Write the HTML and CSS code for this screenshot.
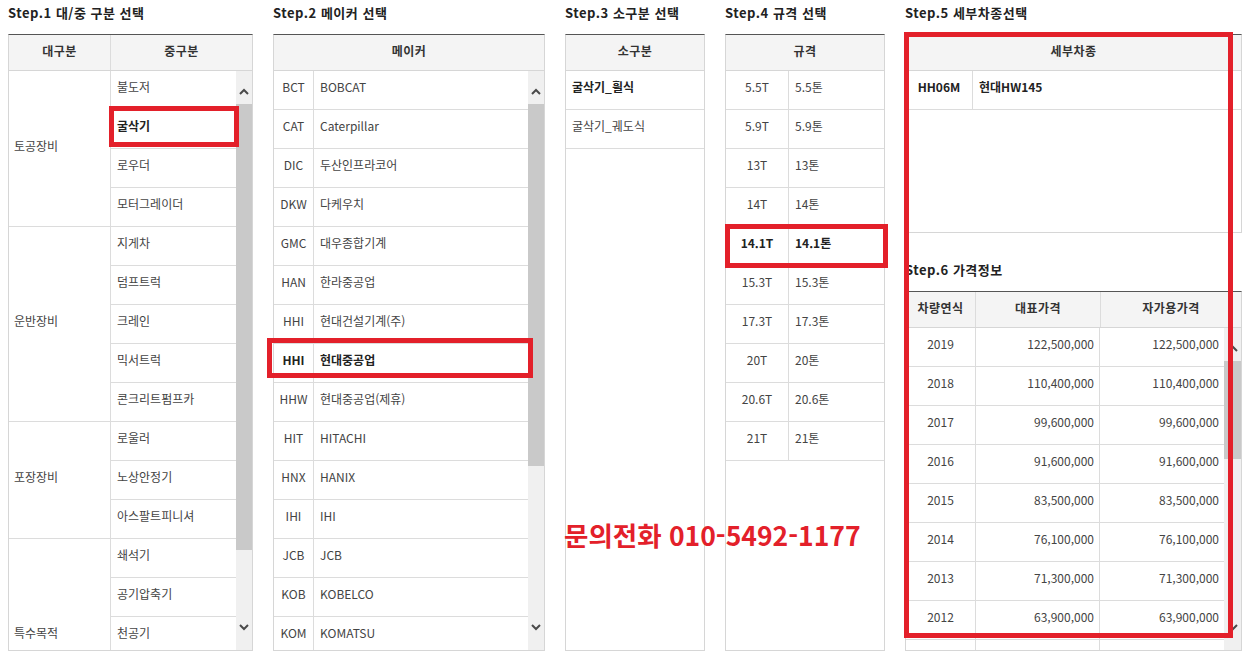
FILE: index.html
```html
<!DOCTYPE html>
<html lang="ko">
<head>
<meta charset="utf-8">
<title>건설기계 시세 조회</title>
<link rel="stylesheet" href="styles.css">
</head>
<body>
<div class="page">

  <section class="col col1">
    <h2 class="step">Step.1 대/중 구분 선택</h2>
    <div class="panel">
      <div class="thead">
        <div class="th w-dae">대구분</div>
        <div class="th">중구분</div>
      </div>
      <div class="tbody">
        <div class="grid1">
          <div class="g-dae r1">토공장비</div>
          <div class="g-dae r5">운반장비</div>
          <div class="g-dae r10">포장장비</div>
          <div class="g-dae r13">특수목적</div>
          <div class="g-jung">불도저</div>
          <div class="g-jung bold">굴삭기</div>
          <div class="g-jung">로우더</div>
          <div class="g-jung">모터그레이더</div>
          <div class="g-jung">지게차</div>
          <div class="g-jung">덤프트럭</div>
          <div class="g-jung">크레인</div>
          <div class="g-jung">믹서트럭</div>
          <div class="g-jung">콘크리트펌프카</div>
          <div class="g-jung">로울러</div>
          <div class="g-jung">노상안정기</div>
          <div class="g-jung">아스팔트피니셔</div>
          <div class="g-jung">쇄석기</div>
          <div class="g-jung">공기압축기</div>
          <div class="g-jung">천공기</div>
        </div>
        <div class="sbar">
          <div class="sb-btn sb-up"><svg width="10" height="7" viewBox="0 0 10 7"><polyline points="1,6 5,2 9,6" fill="none" stroke="#4a4a4a" stroke-width="2"/></svg></div>
          <div class="sb-track"><div class="sb-thumb t1"></div></div>
          <div class="sb-btn sb-down"><svg width="10" height="7" viewBox="0 0 10 7"><polyline points="1,1 5,5 9,1" fill="none" stroke="#4a4a4a" stroke-width="2"/></svg></div>
        </div>
      </div>
    </div>
  </section>

  <section class="col col2">
    <h2 class="step">Step.2 메이커 선택</h2>
    <div class="panel">
      <div class="thead">
        <div class="th">메이커</div>
      </div>
      <div class="tbody">
        <div class="rows">
          <div class="row"><div class="cell code">BCT</div><div class="cell">BOBCAT</div></div>
          <div class="row"><div class="cell code">CAT</div><div class="cell">Caterpillar</div></div>
          <div class="row"><div class="cell code">DIC</div><div class="cell">두산인프라코어</div></div>
          <div class="row"><div class="cell code">DKW</div><div class="cell">다케우치</div></div>
          <div class="row"><div class="cell code">GMC</div><div class="cell">대우종합기계</div></div>
          <div class="row"><div class="cell code">HAN</div><div class="cell">한라중공업</div></div>
          <div class="row"><div class="cell code">HHI</div><div class="cell">현대건설기계(주)</div></div>
          <div class="row bold"><div class="cell code">HHI</div><div class="cell">현대중공업</div></div>
          <div class="row"><div class="cell code">HHW</div><div class="cell">현대중공업(제휴)</div></div>
          <div class="row"><div class="cell code">HIT</div><div class="cell">HITACHI</div></div>
          <div class="row"><div class="cell code">HNX</div><div class="cell">HANIX</div></div>
          <div class="row"><div class="cell code">IHI</div><div class="cell">IHI</div></div>
          <div class="row"><div class="cell code">JCB</div><div class="cell">JCB</div></div>
          <div class="row"><div class="cell code">KOB</div><div class="cell">KOBELCO</div></div>
          <div class="row"><div class="cell code">KOM</div><div class="cell">KOMATSU</div></div>
        </div>
        <div class="sbar">
          <div class="sb-btn sb-up"><svg width="10" height="7" viewBox="0 0 10 7"><polyline points="1,6 5,2 9,6" fill="none" stroke="#4a4a4a" stroke-width="2"/></svg></div>
          <div class="sb-track"><div class="sb-thumb t2"></div></div>
          <div class="sb-btn sb-down"><svg width="10" height="7" viewBox="0 0 10 7"><polyline points="1,1 5,5 9,1" fill="none" stroke="#4a4a4a" stroke-width="2"/></svg></div>
        </div>
      </div>
    </div>
  </section>

  <section class="col col3">
    <h2 class="step">Step.3 소구분 선택</h2>
    <div class="panel">
      <div class="thead">
        <div class="th">소구분</div>
      </div>
      <div class="tbody">
        <div class="rows">
          <div class="row bold"><div class="cell">굴삭기_휠식</div></div>
          <div class="row"><div class="cell">굴삭기_궤도식</div></div>
        </div>
      </div>
    </div>
  </section>

  <section class="col col4">
    <h2 class="step">Step.4 규격 선택</h2>
    <div class="panel">
      <div class="thead">
        <div class="th">규격</div>
      </div>
      <div class="tbody">
        <div class="rows">
          <div class="row"><div class="cell code">5.5T</div><div class="cell">5.5톤</div></div>
          <div class="row"><div class="cell code">5.9T</div><div class="cell">5.9톤</div></div>
          <div class="row"><div class="cell code">13T</div><div class="cell">13톤</div></div>
          <div class="row"><div class="cell code">14T</div><div class="cell">14톤</div></div>
          <div class="row bold"><div class="cell code">14.1T</div><div class="cell">14.1톤</div></div>
          <div class="row"><div class="cell code">15.3T</div><div class="cell">15.3톤</div></div>
          <div class="row"><div class="cell code">17.3T</div><div class="cell">17.3톤</div></div>
          <div class="row"><div class="cell code">20T</div><div class="cell">20톤</div></div>
          <div class="row"><div class="cell code">20.6T</div><div class="cell">20.6톤</div></div>
          <div class="row"><div class="cell code">21T</div><div class="cell">21톤</div></div>
        </div>
      </div>
    </div>
  </section>

  <section class="col col5">
    <h2 class="step">Step.5 세부차종선택</h2>
    <div class="panel panel5">
      <div class="thead">
        <div class="th">세부차종</div>
      </div>
      <div class="tbody">
        <div class="rows">
          <div class="row bold"><div class="cell code">HH06M</div><div class="cell">현대HW145</div></div>
        </div>
      </div>
    </div>

    <h2 class="step step6">Step.6 가격정보</h2>
    <div class="panel panel6">
      <div class="thead">
        <div class="th w-year">차량연식</div>
        <div class="th w-p1">대표가격</div>
        <div class="th">자가용가격</div>
      </div>
      <div class="tbody">
        <div class="rows">
          <div class="row"><div class="cell year">2019</div><div class="cell price p1">122,500,000</div><div class="cell price">122,500,000</div></div>
          <div class="row"><div class="cell year">2018</div><div class="cell price p1">110,400,000</div><div class="cell price">110,400,000</div></div>
          <div class="row"><div class="cell year">2017</div><div class="cell price p1">99,600,000</div><div class="cell price">99,600,000</div></div>
          <div class="row"><div class="cell year">2016</div><div class="cell price p1">91,600,000</div><div class="cell price">91,600,000</div></div>
          <div class="row"><div class="cell year">2015</div><div class="cell price p1">83,500,000</div><div class="cell price">83,500,000</div></div>
          <div class="row"><div class="cell year">2014</div><div class="cell price p1">76,100,000</div><div class="cell price">76,100,000</div></div>
          <div class="row"><div class="cell year">2013</div><div class="cell price p1">71,300,000</div><div class="cell price">71,300,000</div></div>
          <div class="row"><div class="cell year">2012</div><div class="cell price p1">63,900,000</div><div class="cell price">63,900,000</div></div>
          <div class="row"><div class="cell year"></div><div class="cell price p1"></div><div class="cell price"></div></div>
        </div>
        <div class="sbar sbar17">
          <div class="sb-btn sb-up"><svg width="10" height="7" viewBox="0 0 10 7"><polyline points="1,6 5,2 9,6" fill="none" stroke="#4a4a4a" stroke-width="2"/></svg></div>
          <div class="sb-track"><div class="sb-thumb t6"></div></div>
          <div class="sb-btn sb-down"><svg width="10" height="7" viewBox="0 0 10 7"><polyline points="1,1 5,5 9,1" fill="none" stroke="#4a4a4a" stroke-width="2"/></svg></div>
        </div>
      </div>
    </div>
  </section>

  <div class="mark m1"></div>
  <div class="mark m2"></div>
  <div class="mark m3"></div>
  <div class="mark m4"></div>
  <div class="phone">문의전화 010-5492-1177</div>
</div>
</body>
</html>
```

FILE: styles.css
```css
* { box-sizing: border-box; margin: 0; padding: 0; }
html, body { background: #fff; }
body {
  font-family: "Noto Sans CJK KR", "Noto Sans", sans-serif;
  font-size: 12px;
  color: #444;
}

.page {
  position: relative;
  display: flex;
  align-items: flex-start;
  gap: 20px;
  padding: 0 8px;
  width: 1252px;
  height: 663px;
  overflow: hidden;
}

.col { display: flex; flex-direction: column; flex: none; }

.step {
  height: 34px;
  line-height: 26px;
  font-size: 13px;
  font-weight: 700;
  color: #222;
  letter-spacing: 0.5px;
  white-space: nowrap;
}
.step6 { height: 58px; padding-top: 24px; }

.panel {
  display: flex;
  flex-direction: column;
  border: 1px solid #d6d6d6;
  border-top-color: #555;
  background: #fff;
}
.col1 .panel { width: 245px; }
.col2 .panel { width: 272px; }
.col3 .panel { width: 140px; }
.col4 .panel { width: 160px; }
.col5 .panel { width: 337px; }

.thead {
  display: flex;
  height: 36px;
  flex: none;
  background: #f4f4f4;
  border-bottom: 1px solid #d6d6d6;
}
.th {
  display: flex;
  align-items: center;
  justify-content: center;
  padding-bottom: 5px;
  font-weight: 700;
  color: #333;
  letter-spacing: 0.5px;
  border-right: 1px solid #dcdcdc;
}
.th:last-child { flex: 1; border-right: 0; }
.w-dae { width: 102px; }
.w-year { width: 70px; }
.w-p1 { width: 125px; }

.tbody {
  display: flex;
  height: 579px;
  overflow: hidden;
}
.panel5 .tbody { height: 161px; }
.panel6 .tbody { height: 322px; }

.rows { flex: 1; min-width: 0; }
.row {
  display: flex;
  height: 39px;
  border-bottom: 1px solid #dcdcdc;
}
.cell {
  display: flex;
  align-items: center;
  padding: 0 6px 7px;
  white-space: nowrap;
  border-right: 1px solid #dcdcdc;
}
.cell:last-child { flex: 1; border-right: 0; }
.code { justify-content: center; padding: 0 0 7px; flex: none; }
.col2 .code { width: 40px; }
.col4 .code { width: 63px; }
.col5 .panel5 .code { width: 67px; }
.year { width: 70px; justify-content: center; padding: 0 0 7px; flex: none; }
.price { justify-content: flex-end; padding: 0 5px 7px 0; }
.p1 { width: 124px; flex: none; }

.bold, .bold .cell { font-weight: 700; color: #222; }

/* group table */
.grid1 {
  flex: 1;
  display: grid;
  grid-template-columns: 102px 1fr;
  grid-auto-rows: 39px;
}
.g-dae {
  grid-column: 1;
  display: flex;
  align-items: center;
  padding: 0 0 7px 5px;
  border-right: 1px solid #dcdcdc;
  border-bottom: 1px solid #dcdcdc;
}
.r1 { grid-row: 1 / span 4; }
.r5 { grid-row: 5 / span 5; }
.r10 { grid-row: 10 / span 3; }
.r13 { grid-row: 13 / span 5; }
.g-jung {
  grid-column: 2;
  display: flex;
  align-items: center;
  padding: 0 0 7px 6px;
  border-bottom: 1px solid #dcdcdc;
  white-space: nowrap;
}

/* scrollbars */
.sbar {
  width: 16px;
  flex: none;
  display: flex;
  flex-direction: column;
  background: #f0f0f0;
}
.sbar17 { width: 17px; }
.sb-btn {
  height: 33px;
  flex: none;
  display: flex;
  justify-content: center;
}
.sb-up { align-items: flex-start; padding-top: 17px; }
.sb-down { align-items: flex-end; padding-bottom: 19px; }
.sb-track { flex: 1; }
.sb-thumb { background: #c9c9c9; }
.t1 { height: 446px; }
.t2 { height: 362px; }
.t6 { height: 98px; }

/* highlight marks */
.mark {
  position: absolute;
  border: 5px solid #e3202a;
  pointer-events: none;
}
.m1 { left: 109px; top: 106px; width: 130px; height: 41px; }
.m2 { left: 267px; top: 338px; width: 266px; height: 40px; }
.m3 { left: 725px; top: 224px; width: 163px; height: 44px; }
.m4 { left: 904px; top: 32px; width: 329px; height: 606px; }

.phone {
  position: absolute;
  left: 564px;
  top: 519px;
  font-size: 26.5px;
  line-height: 32px;
  font-weight: 700;
  color: #e3202a;
  white-space: nowrap;
}
```
